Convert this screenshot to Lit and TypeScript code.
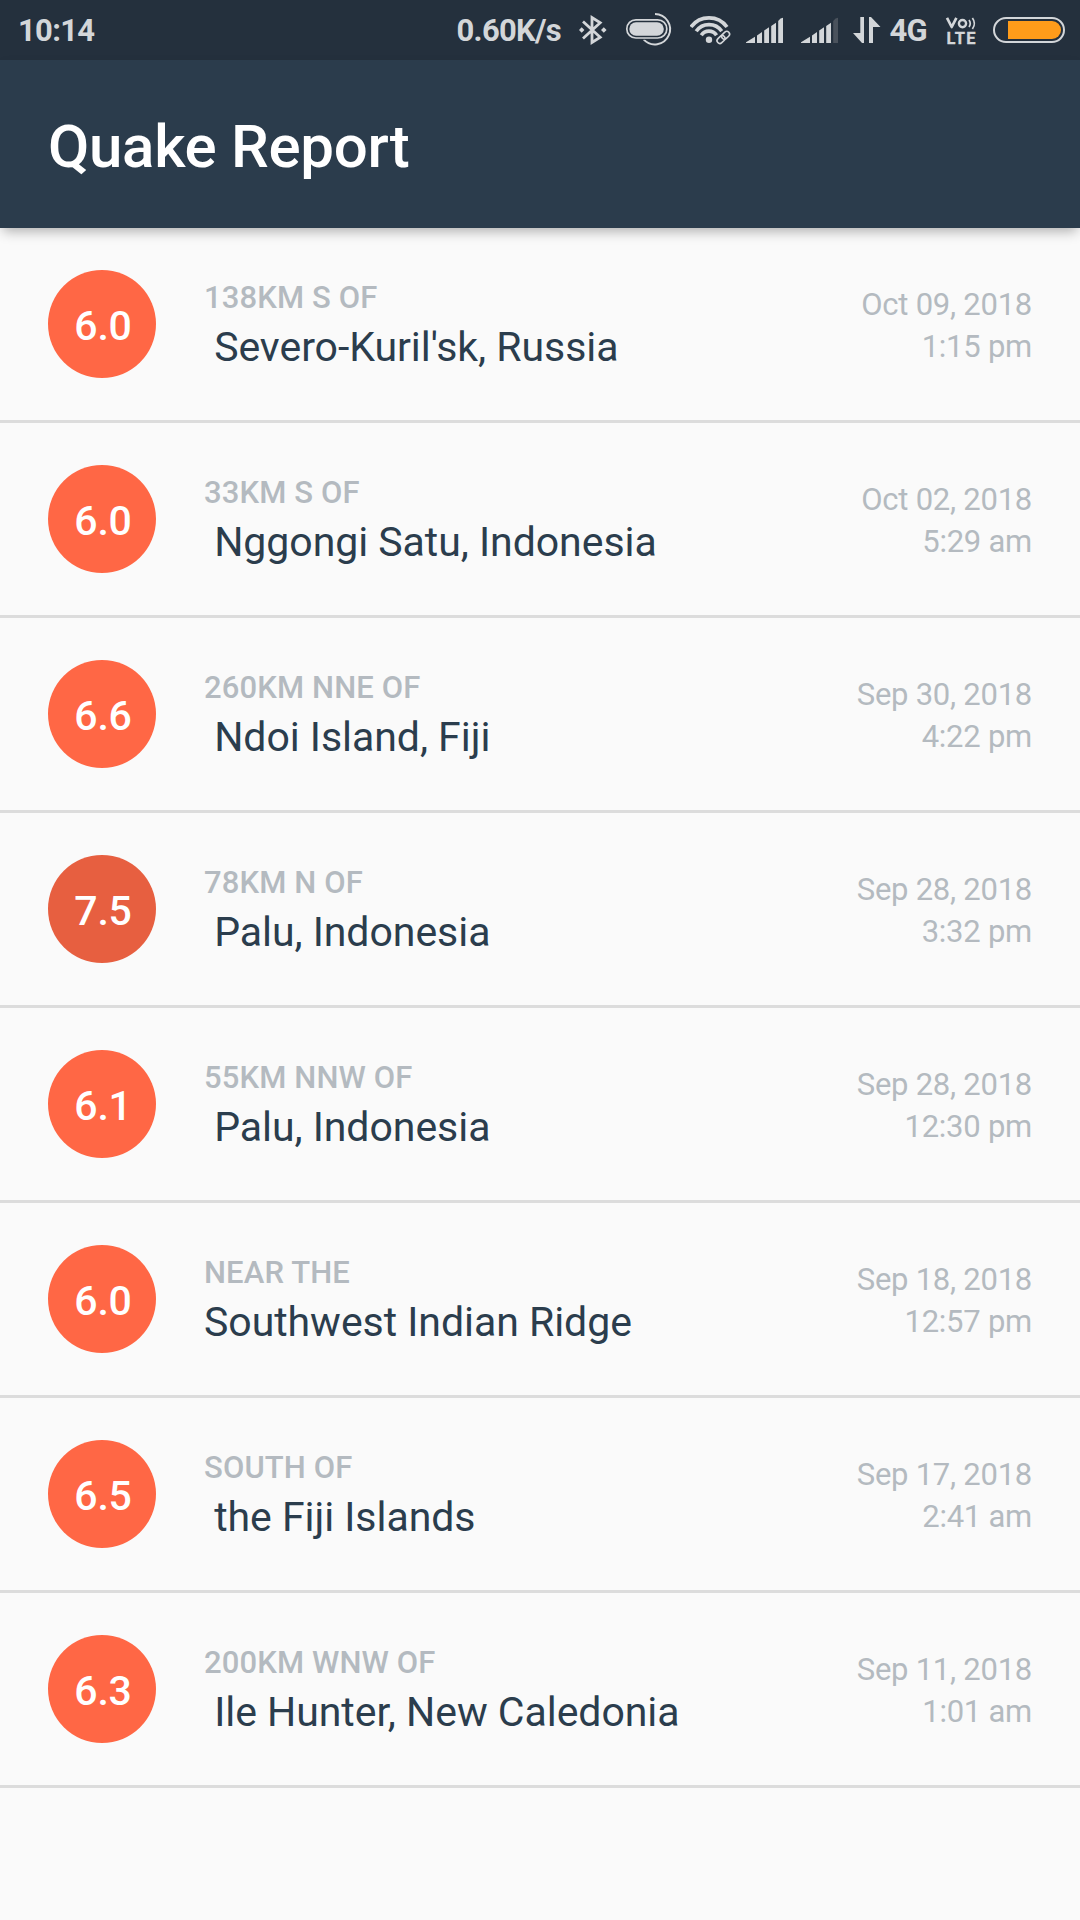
import { LitElement, html, css } from "lit";
import { customElement, property } from "lit/decorators.js";
import { classMap } from "lit/directives/class-map.js";

interface Quake {
  magnitude: string;
  offset: string;
  place: string;
  date: string;
  time: string;
}

const QUAKES: Quake[] = [
  { magnitude: "6.0", offset: "138KM S OF", place: " Severo-Kuril'sk, Russia", date: "Oct 09, 2018", time: "1:15 pm" },
  { magnitude: "6.0", offset: "33KM S OF", place: " Nggongi Satu, Indonesia", date: "Oct 02, 2018", time: "5:29 am" },
  { magnitude: "6.6", offset: "260KM NNE OF", place: " Ndoi Island, Fiji", date: "Sep 30, 2018", time: "4:22 pm" },
  { magnitude: "7.5", offset: "78KM N OF", place: " Palu, Indonesia", date: "Sep 28, 2018", time: "3:32 pm" },
  { magnitude: "6.1", offset: "55KM NNW OF", place: " Palu, Indonesia", date: "Sep 28, 2018", time: "12:30 pm" },
  { magnitude: "6.0", offset: "NEAR THE", place: "Southwest Indian Ridge", date: "Sep 18, 2018", time: "12:57 pm" },
  { magnitude: "6.5", offset: "SOUTH OF", place: " the Fiji Islands", date: "Sep 17, 2018", time: "2:41 am" },
  { magnitude: "6.3", offset: "200KM WNW OF", place: " Ile Hunter, New Caledonia", date: "Sep 11, 2018", time: "1:01 am" },
];

@customElement("status-bar")
export class StatusBar extends LitElement {
  static styles = css`
    :host {
      display: flex;
      align-items: center;
      box-sizing: border-box;
      height: 60px;
      padding: 0 15px 0 18px;
      background: #24303d;
      color: #d3d6d9;
      font: 700 31px/60px Roboto, sans-serif;
      letter-spacing: -0.72px;
      white-space: pre;
    }
    .clock, .speed, .label { padding-top: 2px; }
    .clock { flex: 1; }
    .speed { margin-right: 18px; }
    .label { box-sizing: border-box; width: 47px; padding-left: 8.5px; }
    svg { display: block; flex: none; height: 60px; fill: #d3d6d9; }
    .line { fill: none; stroke: #d3d6d9; }
    .dim { fill: #4a525c; }
    .charge { fill: #ff9c1a; }
    .volte { font: 700 16.5px Roboto, sans-serif; letter-spacing: 0; stroke: #d3d6d9; stroke-width: 0.3px; }
    .cutout { fill: none; stroke: #24303d; }
  `;

  private signal(full: boolean) {
    const width = full ? 55 : 52;
    return html`<svg width=${width} viewBox="746 0 ${width} 60">
      <path d="M746 43V42.3L755 36.8V43zM757 43V35.4L762 32V43zM764.2 43V30.6L769 27.3V43zM771.2 43V26L776 22.7V43z" />
      <path class=${classMap({ dim: !full })} d="M778.2 43V21L780.5 18.5L783 17.7V43z" />
    </svg>`;
  }

  render() {
    return html`
      <span class="clock">10:14</span>
      <span class="speed">0.60K/s</span>
      <svg width="45" viewBox="579 0 45 60">
        <path class="line" stroke-width="2.8" d="M583 21.5L600.2 37.2L592 42.4V17.6L600.2 22.8L583 38.5" />
        <path d="M579 30l2.7-2.7 2.7 2.7-2.7 2.7zM601 30l2.8-2.7 2.8 2.7-2.8 2.7z" />
      </svg>
      <svg width="66" viewBox="624 0 66 60">
        <path class="line" stroke-width="2" d="M655 14A15.2 15.2 0 1 1 643.6 39.4" />
        <rect class="cutout" x="626.8" y="19.8" width="40" height="18.2" rx="9.1" stroke-width="3.6" />
        <rect class="line" x="626.8" y="19.8" width="40" height="18.2" rx="9.1" stroke-width="1.7" />
        <rect x="629.3" y="22.3" width="34.5" height="13.4" rx="6.7" />
      </svg>
      <svg width="56" viewBox="690 0 56 60">
        <path class="line" stroke-width="3.7" d="M691 27A22.3 22.3 0 0 1 727 27M696.2 31.3A15.6 15.6 0 0 1 721.8 31.3M701.3 35.2A9.2 9.2 0 0 1 716.5 35.2" />
        <circle cx="709" cy="39.8" r="3.2" />
        <g class="line" stroke-width="1.6" transform="rotate(-43 723.3 37.4)">
          <rect class="cutout" x="714.6" y="33.5" width="17.4" height="7.8" rx="3.9" stroke-width="3" />
          <rect x="715.8" y="34.6" width="8.8" height="5.6" rx="2.8" />
          <rect x="722" y="34.6" width="8.8" height="5.6" rx="2.8" />
        </g>
      </svg>
      ${this.signal(true)}
      ${this.signal(false)}
      <svg width="28" viewBox="853 0 28 60">
        <path d="M860.3 17H864V43H862L853 33H860.3zM869 17H871L880.5 27H873V43H869z" />
      </svg>
      <span class="label">4G</span>
      <svg width="65" viewBox="928 0 65 60">
        <path class="line" stroke-width="2.7" stroke-linejoin="round" d="M947 17.8L951.7 27L956.4 17.8" />
        <circle class="line" cx="962.5" cy="23.6" r="3.6" stroke-width="2.4" />
        <path class="line" stroke-width="1.7" d="M969 20Q971.5 23.5 969 27M972.4 18Q976.4 23.5 972.4 29" />
        <text class="volte" x="946.5" y="44" textLength="29">LTE</text>
      </svg>
      <svg width="72" viewBox="993 0 72 60">
        <rect class="line" x="994" y="18" width="70" height="24" rx="12" stroke-width="2" />
        <path class="charge" d="M1008 21H1052A9 9 0 0 1 1052 39H1008z" />
      </svg>
    `;
  }
}

@customElement("quake-row")
export class QuakeRow extends LitElement {
  @property({ attribute: false }) quake!: Quake;

  static styles = css`
    :host {
      display: flex;
      align-items: center;
      box-sizing: border-box;
      height: 195px;
      padding: 0 48px;
      border-bottom: 3px solid #dcdcdc;
      color: #b4bac0;
      font: 400 31px/42px Roboto, sans-serif;
      white-space: pre;
    }
    .magnitude {
      width: 108px;
      height: 108px;
      box-sizing: border-box;
      padding: 2px 0 0 2px;
      margin-right: 48px;
      border-radius: 50%;
      background: #ff6745;
      color: #fff;
      font-weight: 500;
      font-size: 41px;
      line-height: 108px;
      letter-spacing: -0.2px;
      text-align: center;
    }
    .major { background: #e75f40; }
    .where { flex: 1; padding-top: 4px; }
    .offset { font-weight: 500; letter-spacing: 0.13px; }
    .place { color: #2b3d4d; font-size: 41px; line-height: 56px; letter-spacing: -0.04px; }
    .when { text-align: right; padding-top: 4px; letter-spacing: -0.25px; }
  `;

  render() {
    const q = this.quake;
    return html`
      <div class=${classMap({ magnitude: true, major: Number(q.magnitude) >= 7 })}>${q.magnitude}</div>
      <div class="where"><div class="offset">${q.offset}</div><div class="place">${q.place}</div></div>
      <div class="when"><div>${q.date}</div><div>${q.time}</div></div>
    `;
  }
}

@customElement("app-root")
export class AppRoot extends LitElement {
  static styles = css`
    :host {
      display: flex;
      flex-direction: column;
      min-height: 1920px;
      background: #fafafa;
      overflow: hidden;
    }
    .toolbar {
      box-sizing: border-box;
      height: 168px;
      padding: 3px 48px 0;
      background: #2b3c4c;
      color: #fff;
      font: 500 60px/168px Roboto, sans-serif;
      letter-spacing: -0.3px;
      box-shadow: 0 6px 12px -3px rgba(0, 0, 0, 0.32);
    }
    .list { display: flex; flex-direction: column; }
  `;

  render() {
    return html`
      <status-bar></status-bar>
      <header class="toolbar">Quake Report</header>
      <main class="list">${QUAKES.map((q) => html`<quake-row .quake=${q}></quake-row>`)}</main>
    `;
  }
}
